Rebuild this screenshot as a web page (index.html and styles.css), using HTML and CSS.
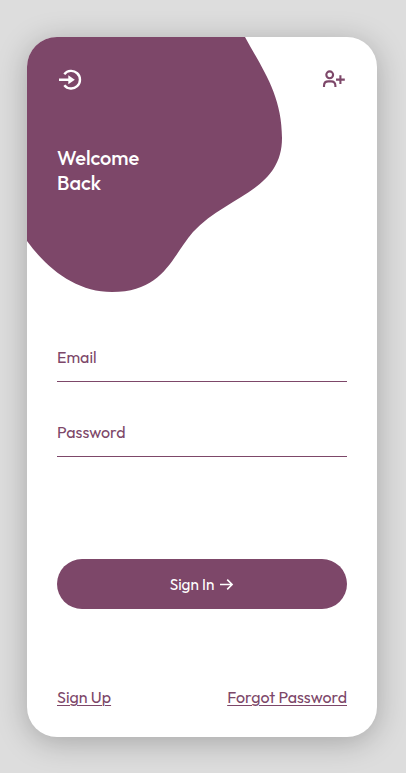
FILE: index.html
```html
<!DOCTYPE html>
<html lang="en">
<head>
<meta charset="utf-8">
<title>Sign In</title>
<link rel="stylesheet" href="styles.css">
</head>
<body>
<main class="card">
  <svg class="blob" viewBox="0 0 350 300" aria-hidden="true"><path d="M0 0H218C236 33 255 58 255 101C255 154 199 159 166 195C145 219 137 255 85 255C50 255 21 233 0 204Z"/></svg>
  <header class="top">
    <svg class="icon icon-login" viewBox="0 0 26 26" aria-hidden="true"><path class="line" d="M7.3 7.2A8.8 8.8 0 1 1 7.3 18.2M2 12.7H13"/><path class="solid" d="M11.3 8.2L17.8 12.7L11.3 17.2Z"/></svg>
    <svg class="icon icon-user" viewBox="0 0 26 26" aria-hidden="true"><circle cx="8.7" cy="7.8" r="3.4"/><path d="M3 20V18.8Q3 14.4 7.3 14.4H10.1Q14.4 14.4 14.4 18.8V20M19.4 8.2V17M15 12.6H23.8"/></svg>
  </header>
  <h1 class="title"><span class="welcome">Welcome</span><br><span class="back">Back</span></h1>
  <form class="form">
    <div class="field"><span class="email">Email</span></div>
    <div class="field"><span class="password">Password</span></div>
    <button class="submit" type="button"><span>Sign In</span><svg class="arrow" viewBox="0 0 14 14" aria-hidden="true"><path d="M0 7.5H11.8M7.2 2.6L12.1 7.5L7.2 12.4"/></svg></button>
  </form>
  <footer class="links"><a class="signup" href="#">Sign Up</a><a class="forgot" href="#">Forgot Password</a></footer>
</main>
</body>
</html>
```
FILE: styles.css
```css
* { box-sizing: border-box; }
body {
  margin: 0;
  height: 773px;
  padding: 37px 29px 36px 27px;
  background: #ddd;
  color: #7d4769;
  font-family: Outfit, Lato, sans-serif;
  font-size: 16px;
  overflow: hidden;
}
.card {
  position: relative;
  display: flex;
  flex-direction: column;
  width: 350px;
  height: 700px;
  padding: 30px;
  border-radius: 30px;
  background: #fff;
  box-shadow: 0 5px 30px rgba(0, 0, 0, .25);
}
.blob {
  position: absolute;
  top: 0;
  left: 0;
  width: 350px;
  height: 300px;
  border-top-left-radius: 30px;
  fill: #7d4769;
}
.top {
  position: relative;
  display: flex;
  justify-content: space-between;
  height: 26px;
}
.icon { width: 26px; height: 26px; fill: none; stroke: currentColor; stroke-width: 2.1; }
.icon-login { color: #fff; }
.icon-login .line { stroke-width: 2.4; }
.icon-login .solid { fill: currentColor; stroke: none; }
.title {
  position: relative;
  margin: 52px 0 0;
  color: #fff;
  font-size: 20px;
  font-weight: 500;
  line-height: 25px;
}
.form { display: flex; flex-direction: column; margin-top: 138px; }
.field {
  height: 49px;
  margin-bottom: 26px;
  padding-top: 13px;
  border-bottom: 1px solid #7d4769;
  line-height: 22px;
}
.submit {
  display: flex;
  justify-content: center;
  align-items: center;
  gap: 6px;
  height: 50px;
  margin-top: 76px;
  padding: 0;
  border: 0;
  border-radius: 25px;
  background: #7d4769;
  color: #fff;
  font: inherit;
  font-size: 15.3px;
}
.arrow { width: 14px; height: 14px; fill: none; stroke: currentColor; stroke-width: 1.6; }
.links {
  display: flex;
  justify-content: space-between;
  margin-top: auto;
  line-height: 20px;
}
.links a { color: inherit; text-underline-offset: 2px; text-decoration-thickness: 1px; }
```
